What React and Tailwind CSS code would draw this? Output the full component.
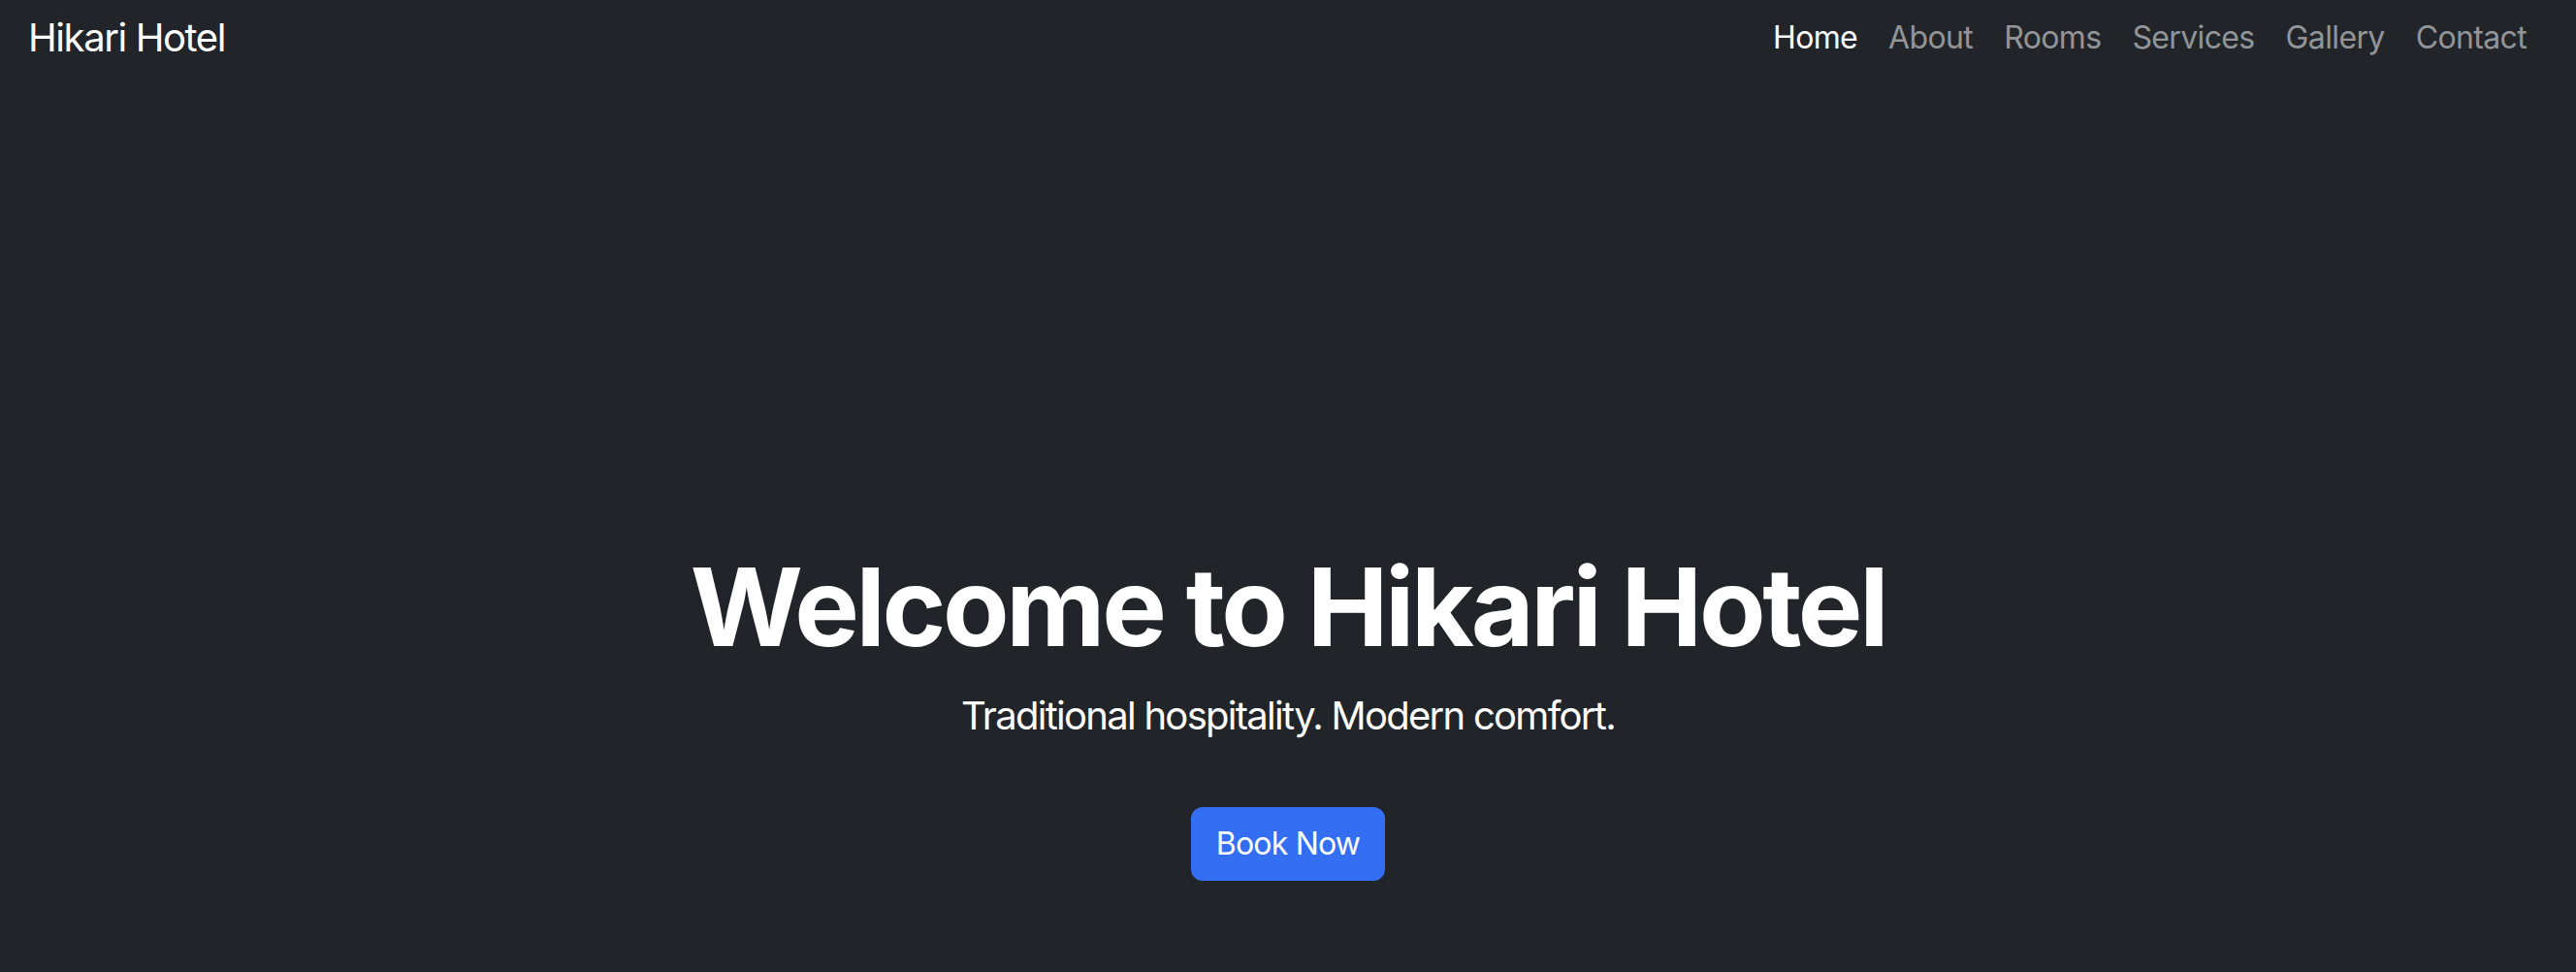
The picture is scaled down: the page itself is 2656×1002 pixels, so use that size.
import React from 'react';

const links = ['Home', 'About', 'Rooms', 'Services', 'Gallery', 'Contact'];

const App = () => {
    return (
        <div className="min-h-screen bg-[#212529] text-white" style={{ fontFamily: 'Inter, "Noto Sans", sans-serif' }}>
            <nav className="h-[77px] flex items-center justify-between pl-[29px] pr-[35px]">
                <a href="#" className="text-[40px] leading-[60px] tracking-[-0.035em] text-white">Hikari Hotel</a>
                <ul className="flex items-center">
                    {links.map((link, i) => (
                        <li key={link}>
                            <a
                                href="#"
                                className={`block px-4 text-[32px] leading-[48px] tracking-[-0.02em] ${i === 0 ? 'text-white' : 'text-[#939598]'}`}
                            >
                                {link}
                            </a>
                        </li>
                    ))}
                </ul>
            </nav>

            <section className="flex flex-col items-center text-center pt-[481px]">
                <h1 className="text-[112px] leading-[1.2] font-bold tracking-[-0.03em] mb-4">Welcome to Hikari Hotel</h1>
                <p className="text-[40px] leading-[60px] tracking-[-0.043em] mb-16">Traditional hospitality. Modern comfort.</p>
                <button className="bg-[#346ff3] text-white text-[32px] leading-[48px] tracking-[-0.025em] px-6 py-3 rounded-xl border-2 border-[#346ff3]">
                    Book Now
                </button>
            </section>
        </div>
    );
};

export default App;
